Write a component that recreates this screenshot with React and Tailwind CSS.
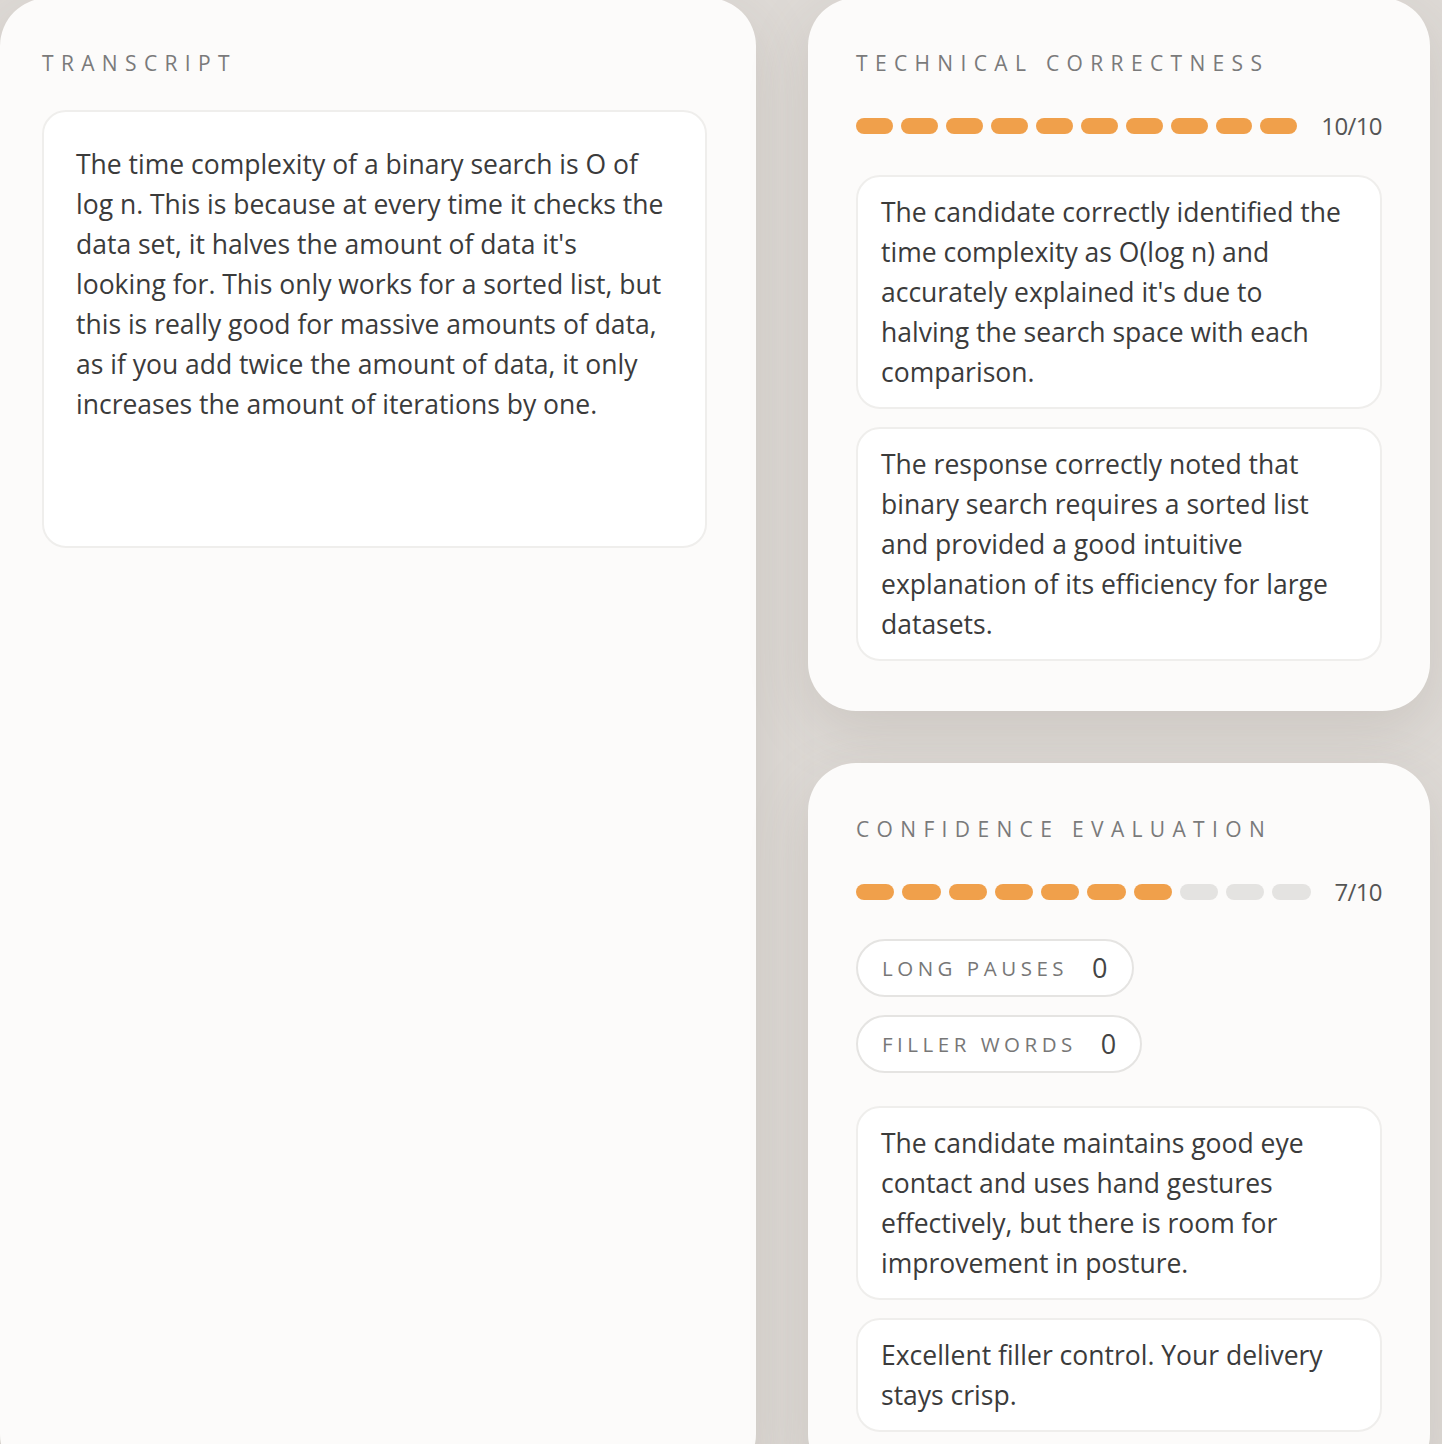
import React from 'react';

const font = { fontFamily: '"Segoe UI", "Open Sans", "Noto Sans", sans-serif' };

const Label = ({ children }) => (
  <h3 className="text-[21px] tracking-[0.35em] text-[#7a7a7a] uppercase leading-none">{children}</h3>
);

const Meter = ({ score }) => (
  <div className="flex items-center mt-[40px]">
    <div className="flex flex-1 gap-[8px]">
      {Array.from({ length: 10 }).map((_, i) => (
        <div
          key={i}
          className={i < score ? 'h-[16px] flex-1 rounded-full bg-[#f0a04b]' : 'h-[16px] flex-1 rounded-full bg-[#e4e3e1]'}
        />
      ))}
    </div>
    <span className="ml-[24px] text-[24px] leading-none text-[#555] tracking-tight">{score}/10</span>
  </div>
);

const Note = ({ children }) => (
  <div className="bg-white border-2 border-[#efeeec] rounded-[24px] px-[23px] py-[15px] text-[26.5px] leading-[40px] text-[#3b3b3b]">
    {children}
  </div>
);

const Pill = ({ label, value }) => (
  <div className="self-start flex items-center gap-[24px] h-[58px] px-[24px] rounded-full border-2 border-[#e5e4e2] bg-white">
    <span className="text-[20.5px] tracking-[0.22em] text-[#777] uppercase">{label}</span>
    <span className="text-[27px] text-[#444]">{value}</span>
  </div>
);

export default function App() {
  return (
    <div className="min-h-screen bg-[#dedad6] overflow-hidden" style={font}>
      <div className="flex gap-[52px] pr-[12px] -mt-[2px]">
        {/* Transcript */}
        <section className="w-[756px] shrink-0 min-h-[1460px] bg-[#fcfbfa] rounded-[48px] pl-[42px] pr-[49px] pt-[55px] shadow-[0_20px_60px_rgba(120,110,100,0.18)]">
          <Label>Transcript</Label>
          <div className="mt-[36px] bg-white border-2 border-[#efeeec] rounded-[24px] px-[32px] pt-[32px] min-h-[438px] text-[26.5px] leading-[40px] text-[#3b3b3b]">
            The time complexity of a binary search is O of log n. This is because at every time it checks the data set,
            it halves the amount of data it's looking for. This only works for a sorted list, but this is really good for
            massive amounts of data, as if you add twice the amount of data, it only increases the amount of iterations by one.
          </div>
        </section>

        <div className="flex-1 flex flex-col gap-[52px]">
          {/* Technical correctness */}
          <section className="bg-[#fcfbfa] rounded-[48px] px-[48px] pt-[55px] pb-[50px] shadow-[0_20px_60px_rgba(120,110,100,0.18)]">
            <Label>Technical Correctness</Label>
            <Meter score={10} />
            <div className="mt-[37px] flex flex-col gap-[18px]">
              <Note>
                The candidate correctly identified the time complexity as O(log n) and accurately explained it's due to
                halving the search space with each comparison.
              </Note>
              <Note>
                The response correctly noted that binary search requires a sorted list and provided a good intuitive
                explanation of its efficiency for large datasets.
              </Note>
            </div>
          </section>

          {/* Confidence evaluation */}
          <section className="bg-[#fcfbfa] rounded-[48px] px-[48px] pt-[56px] pb-[50px] shadow-[0_20px_60px_rgba(120,110,100,0.18)]">
            <Label>Confidence Evaluation</Label>
            <Meter score={7} />
            <div className="mt-[35px] flex flex-col gap-[18px]">
              <Pill label="Long pauses" value="0" />
              <Pill label="Filler words" value="0" />
            </div>
            <div className="mt-[33px] flex flex-col gap-[18px]">
              <Note>
                The candidate maintains good eye contact and uses hand gestures effectively, but there is room for
                improvement in posture.
              </Note>
              <Note>Excellent filler control. Your delivery stays crisp.</Note>
            </div>
          </section>
        </div>
      </div>
    </div>
  );
}
